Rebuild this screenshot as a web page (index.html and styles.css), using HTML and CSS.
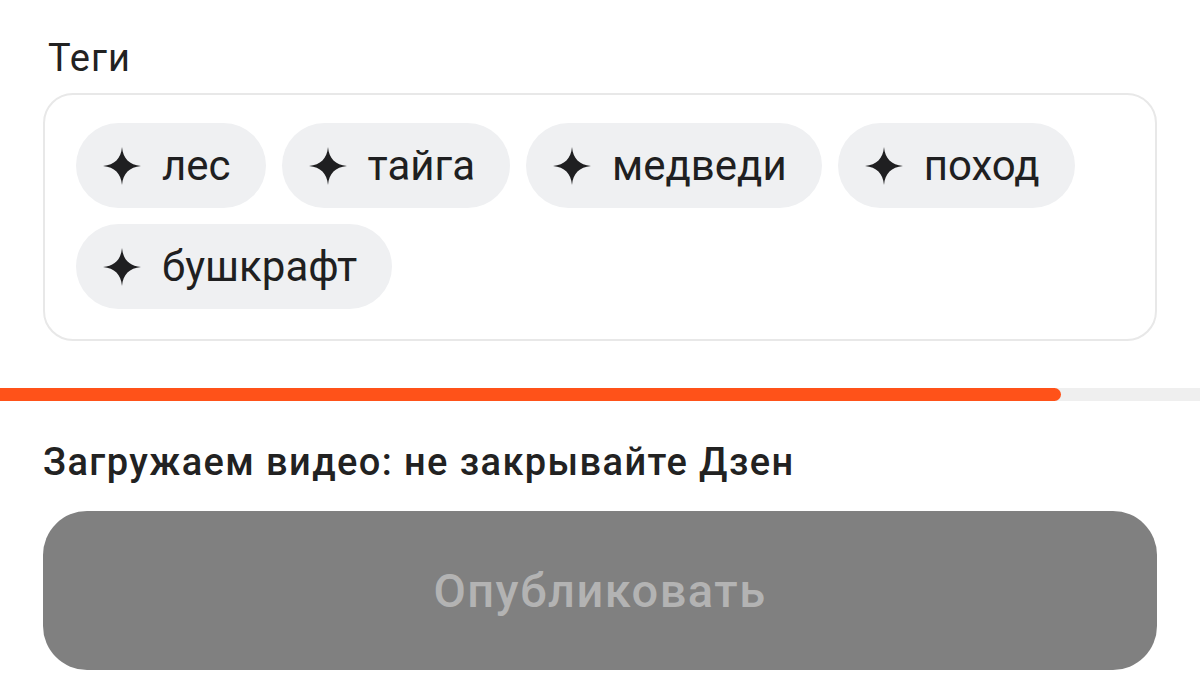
FILE: index.html
```html
<!DOCTYPE html>
<html lang="ru">
<head>
    <meta charset="UTF-8">
    <meta name="viewport" content="width=device-width, initial-scale=1.0">
    <title>Загрузка видео</title>
    <link rel="stylesheet" href="styles.css">
</head>
<body>
    <div class="section">
        <div class="field-label">Теги</div>
        <div class="tags-box">
            <div class="tag">
                <svg class="spark" viewBox="0 0 24 24"><path d="M12 0C12.7 7.4 16.6 11.3 24 12C16.6 12.7 12.7 16.6 12 24C11.3 16.6 7.4 12.7 0 12C7.4 11.3 11.3 7.4 12 0Z"/></svg>
                <span>лес</span>
            </div>
            <div class="tag">
                <svg class="spark" viewBox="0 0 24 24"><path d="M12 0C12.7 7.4 16.6 11.3 24 12C16.6 12.7 12.7 16.6 12 24C11.3 16.6 7.4 12.7 0 12C7.4 11.3 11.3 7.4 12 0Z"/></svg>
                <span>тайга</span>
            </div>
            <div class="tag">
                <svg class="spark" viewBox="0 0 24 24"><path d="M12 0C12.7 7.4 16.6 11.3 24 12C16.6 12.7 12.7 16.6 12 24C11.3 16.6 7.4 12.7 0 12C7.4 11.3 11.3 7.4 12 0Z"/></svg>
                <span>медведи</span>
            </div>
            <div class="tag">
                <svg class="spark" viewBox="0 0 24 24"><path d="M12 0C12.7 7.4 16.6 11.3 24 12C16.6 12.7 12.7 16.6 12 24C11.3 16.6 7.4 12.7 0 12C7.4 11.3 11.3 7.4 12 0Z"/></svg>
                <span>поход</span>
            </div>
            <div class="tag">
                <svg class="spark" viewBox="0 0 24 24"><path d="M12 0C12.7 7.4 16.6 11.3 24 12C16.6 12.7 12.7 16.6 12 24C11.3 16.6 7.4 12.7 0 12C7.4 11.3 11.3 7.4 12 0Z"/></svg>
                <span>бушкрафт</span>
            </div>
        </div>
    </div>

    <div class="progress">
        <div class="progress-fill" style="width: 88.4%"></div>
    </div>

    <div class="section">
        <div class="status">Загружаем видео: не закрывайте Дзен</div>
        <button class="publish" disabled>Опубликовать</button>
    </div>
</body>
</html>
```

FILE: styles.css
```css
body {
    margin: 0;
    padding: 0;
    background-color: #fff;
    font-family: Roboto, "Noto Sans", sans-serif;
    color: #222;
}
.section {
    padding: 0 43px;
}
.field-label {
    font-size: 38px;
    line-height: 44px;
    margin-top: 36px;
    padding-left: 5px;
    letter-spacing: 1px;
    color: #222;
}
.tags-box {
    margin-top: 13px;
    border: 2px solid #e8e8e8;
    border-radius: 30px;
    padding: 28px 31px 30px;
    display: flex;
    flex-wrap: wrap;
    gap: 16px 16px;
}
.tag {
    display: flex;
    align-items: center;
    height: 85px;
    padding: 0 35px 0 27px;
    border-radius: 43px;
    background-color: #eff0f2;
    font-size: 42px;
    color: #1f1f21;
}
.spark {
    width: 38px;
    height: 38px;
    margin-right: 21px;
    fill: #1f1f21;
}
.progress {
    margin-top: 47px;
    height: 13px;
    background-color: #efefef;
}
.progress-fill {
    height: 100%;
    background-color: #ff5219;
    border-radius: 0 7px 7px 0;
}
.status {
    margin-top: 40px;
    font-size: 38px;
    line-height: 42px;
    font-weight: 500;
    letter-spacing: 1.4px;
    color: #222;
}
.publish {
    display: block;
    width: 100%;
    height: 159px;
    margin-top: 28px;
    border: none;
    border-radius: 44px;
    background-color: #808080;
    color: #b3b3b3;
    font-family: Roboto, "Noto Sans", sans-serif;
    font-size: 47px;
    font-weight: 500;
    letter-spacing: 1.5px;
}
```
